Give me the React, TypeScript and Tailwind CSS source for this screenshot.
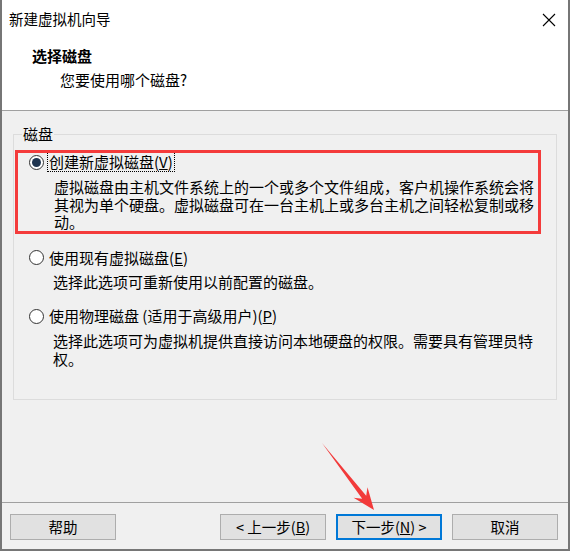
import React from "react";

const font = { fontFamily: '"Noto Sans CJK SC", "Noto Sans", sans-serif' };

function Radio({ checked }: { checked?: boolean }) {
  return (
    <span className="relative flex h-[15px] w-[15px] shrink-0 items-center justify-center rounded-full border border-[#333333] bg-white">
      {checked && <span className="h-[9px] w-[9px] rounded-full bg-[#1f3550]" />}
    </span>
  );
}

function Btn({ children, primary }: { children: React.ReactNode; primary?: boolean }) {
  return (
    <div
      className={
        "flex h-[26px] w-[106px] items-center justify-center bg-[#e1e1e1] text-[14.5px] leading-none text-black " +
        (primary ? "border-2 border-[#0078d7]" : "border border-[#adadad]")
      }
    >
      {children}
    </div>
  );
}

export default function App() {
  return (
    <div
      className="relative flex h-[551px] w-[570px] flex-col overflow-hidden border-x-2 border-b-2 border-[#767676] bg-[#f0f0f0] text-black"
      style={font}
    >
      {/* title + header */}
      <div className="h-[111px] shrink-0 border-b border-[#a0a0a0] bg-white">
        <div className="flex h-[37px] items-center justify-between pl-[7px] pr-[12px]">
          <span className="text-[14.5px] leading-[20px]">新建虚拟机向导</span>
          <svg width="14" height="14" viewBox="0 0 14 14" className="mt-[3px]">
            <path d="M1 1 L13 13 M13 1 L1 13" stroke="#000" strokeWidth="1.1" />
          </svg>
        </div>
        <div className="pl-[30px] pt-[9px] text-[15px] font-bold leading-[20px]">选择磁盘</div>
        <div className="mt-[4px] pl-[58px] text-[15px] leading-[20px]">您要使用哪个磁盘?</div>
      </div>

      {/* body */}
      <div className="flex-1">
        <div className="relative ml-[11px] mt-[23px] h-[266px] w-[544px] border border-[#dcdcdc]">
          <span className="absolute left-[8px] top-[-11px] bg-[#f0f0f0] px-[1px] text-[15px] leading-[20px]">
            磁盘
          </span>
          <div className="pl-[15px] pt-[17px]">
            <div className="flex h-[20px] items-center">
              <Radio checked />
              <span className="ml-[4px] px-[1px] text-[15px] leading-[18px] outline-1 outline-dotted outline-black">
                创建新虚拟磁盘(<u>V</u>)
              </span>
            </div>
            <div className="ml-[25px] mt-[6px] text-[15px] leading-[17.5px]">
              <div>虚拟磁盘由主机文件系统上的一个或多个文件组成，客户机操作系统会将</div>
              <div>其视为单个硬盘。虚拟磁盘可在一台主机上或多台主机之间轻松复制或移</div>
              <div>动。</div>
            </div>

            <div className="mt-[17px] flex h-[20px] items-center">
              <Radio />
              <span className="ml-[5px] text-[15px] leading-[18px]">
                使用现有虚拟磁盘(<u>E</u>)
              </span>
            </div>
            <div className="ml-[24px] mt-[5px] text-[15px] leading-[17.5px]">
              <div>选择此选项可重新使用以前配置的磁盘。</div>
            </div>

            <div className="mt-[16px] flex h-[20px] items-center">
              <Radio />
              <span className="ml-[5px] text-[15px] leading-[18px]">
                使用物理磁盘 (适用于高级用户)(<u>P</u>)
              </span>
            </div>
            <div className="ml-[24px] mt-[6px] text-[15px] leading-[17.5px]">
              <div>选择此选项可为虚拟机提供直接访问本地硬盘的权限。需要具有管理员特</div>
              <div>权。</div>
            </div>
          </div>
        </div>
      </div>

      {/* footer */}
      <div className="h-[47px] shrink-0 border-t border-[#a0a0a0] pt-[11px]">
        <div className="flex items-start pl-[8px] pr-[10px]">
          <Btn>帮助</Btn>
          <div className="flex-1" />
          <div className="flex gap-[10px]">
            <Btn>
              &lt; 上一步(<u>B</u>)
            </Btn>
            <Btn primary>
              下一步(<u>N</u>) &gt;
            </Btn>
            <Btn>取消</Btn>
          </div>
        </div>
      </div>

      {/* annotation overlays */}
      <div className="pointer-events-none absolute left-[13px] top-[150px] h-[84px] w-[526px] border-[3px] border-[#f43b3b]" />
      <svg
        className="pointer-events-none absolute left-[-2px] top-0"
        width="570"
        height="551"
        viewBox="0 0 570 551"
      >
        <polygon
          points="322,443 366.2,495.8 367.5,487.2 374,510 353.6,497.8 362.2,498.8"
          fill="#f23a3a"
        />
      </svg>
    </div>
  );
}
